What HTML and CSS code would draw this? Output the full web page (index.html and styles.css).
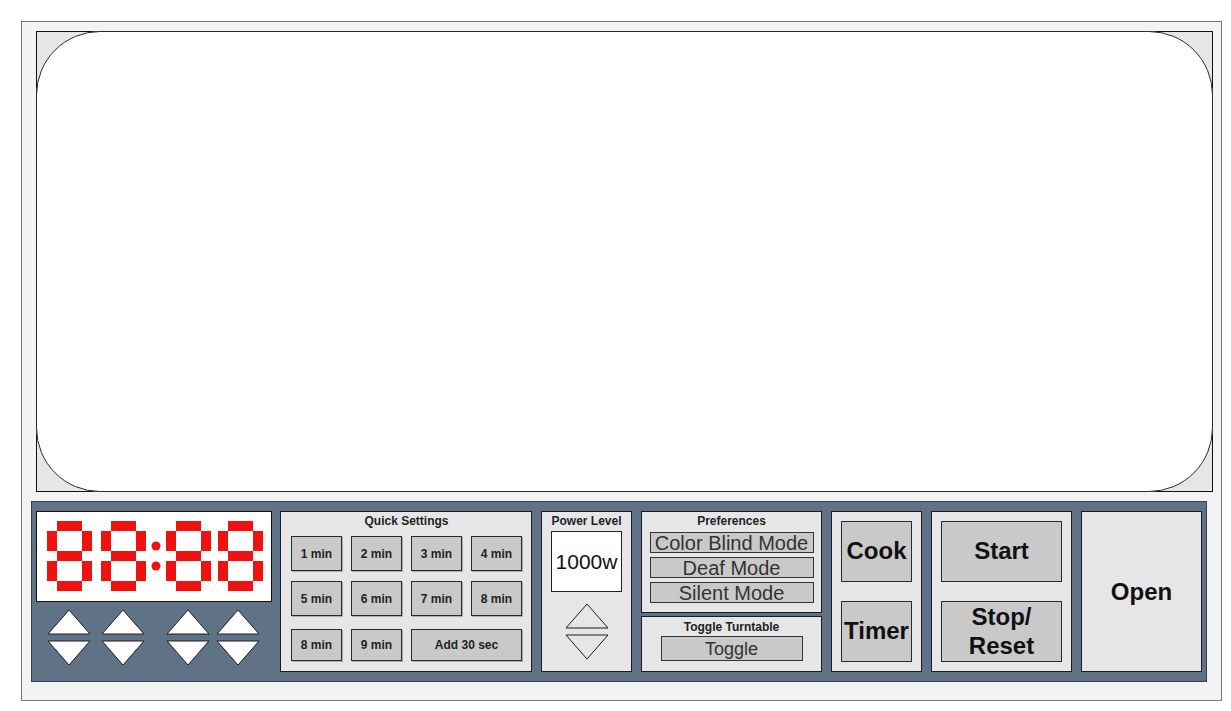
FILE: index.html
```html
<!DOCTYPE html>
<html>
<head>
<meta charset="utf-8">
<title>Microwave</title>
<link rel="stylesheet" href="styles.css">
</head>
<body>
<div class="oven">
  <div class="window"><div class="glass"></div></div>
  <div class="panel">
    <div class="clock">
      <div class="display" aria-label="88:88">
        <svg width="234" height="89" viewBox="0 0 234 89">
          <defs>
            <g id="d8" fill="#f01210">
              <rect x="10" y="0" width="25" height="10"/>
              <rect x="0" y="10" width="10" height="20"/>
              <rect x="35" y="10" width="10" height="20"/>
              <rect x="10" y="30" width="25" height="10"/>
              <rect x="0" y="40" width="10" height="20"/>
              <rect x="35" y="40" width="10" height="20"/>
              <rect x="10" y="60" width="25" height="10"/>
            </g>
          </defs>
          <use href="#d8" x="10" y="9"/>
          <use href="#d8" x="64" y="9"/>
          <circle cx="119" cy="34" r="4.5" fill="#f01210"/>
          <circle cx="119" cy="54" r="4.5" fill="#f01210"/>
          <use href="#d8" x="129" y="9"/>
          <use href="#d8" x="181" y="9"/>
        </svg>
      </div>
      <div class="arrows">
        <svg class="pair p1" width="44" height="58" viewBox="0 0 44 58"><polygon points="1,25 22,1 43,25"/><polygon points="1,32 43,32 22,56"/></svg>
        <svg class="pair p2" width="44" height="58" viewBox="0 0 44 58"><polygon points="1,25 22,1 43,25"/><polygon points="1,32 43,32 22,56"/></svg>
        <svg class="pair p3" width="44" height="58" viewBox="0 0 44 58"><polygon points="1,25 22,1 43,25"/><polygon points="1,32 43,32 22,56"/></svg>
        <svg class="pair p4" width="44" height="58" viewBox="0 0 44 58"><polygon points="1,25 22,1 43,25"/><polygon points="1,32 43,32 22,56"/></svg>
      </div>
    </div>

    <div class="box quick">
      <div class="title">Quick Settings</div>
      <div class="qgrid">
        <div class="btn">1 min</div>
        <div class="btn">2 min</div>
        <div class="btn">3 min</div>
        <div class="btn">4 min</div>
        <div class="btn">5 min</div>
        <div class="btn">6 min</div>
        <div class="btn">7 min</div>
        <div class="btn">8 min</div>
        <div class="btn last">8 min</div>
        <div class="btn last">9 min</div>
        <div class="btn last wide">Add 30 sec</div>
      </div>
    </div>

    <div class="box power">
      <div class="title">Power Level</div>
      <div class="watts">1000w</div>
      <svg class="parrows" width="44" height="58" viewBox="0 0 44 58"><polygon points="1,25 22,1 43,25"/><polygon points="1,32 43,32 22,56"/></svg>
    </div>

    <div class="prefcol">
      <div class="box prefs">
        <div class="title">Preferences</div>
        <div class="pbtn">Color Blind Mode</div>
        <div class="pbtn">Deaf Mode</div>
        <div class="pbtn">Silent Mode</div>
      </div>
      <div class="box turn">
        <div class="title">Toggle Turntable</div>
        <div class="pbtn toggle">Toggle</div>
      </div>
    </div>

    <div class="box stack cook">
      <div class="bigbtn">Cook</div>
      <div class="bigbtn">Timer</div>
    </div>

    <div class="box stack start">
      <div class="bigbtn">Start</div>
      <div class="bigbtn two">Stop/<br>Reset</div>
    </div>

    <div class="box open">Open</div>
  </div>
</div>
</body>
</html>
```

FILE: styles.css
```css
* { box-sizing: border-box; }

html, body {
  margin: 0;
  padding: 0;
  background: #ffffff;
  font-family: "Liberation Sans", Arial, sans-serif;
}

.oven {
  margin: 21px 0 0 21px;
  width: 1201px;
  height: 680px;
  background: #f3f3f3;
  border: 1px solid #7b7b7b;
  padding: 9px 9px 0 9px;
}

.window {
  margin-left: 5px;
  width: 1177px;
  height: 461px;
  background: #e6e6e6;
  border: 1px solid #111;
}

.glass {
  margin: -1px;
  width: calc(100% + 2px);
  height: calc(100% + 2px);
  background: #fff;
  border: 1px solid #2a2a2a;
  border-radius: 64px;
}

.panel {
  margin-top: 9px;
  width: 1176px;
  height: 181px;
  background: #607286;
  border: 1px solid #34404e;
  padding: 9px 4px;
  display: flex;
  gap: 9px;
}

.clock {
  width: 236px;
  margin-right: -1px;
  display: flex;
  flex-direction: column;
}

.display {
  width: 236px;
  height: 91px;
  background: #fff;
  border: 1px solid #111;
}

.display svg { display: block; }

.arrows {
  display: flex;
  margin-top: 7px;
  padding-left: 11px;
}

.pair polygon {
  fill: #fff;
  stroke: #1d1d1d;
  stroke-width: 1;
}

.pair.p2 { margin-left: 10px; }
.pair.p3 { margin-left: 21px; }
.pair.p4 { margin-left: 6px; }

.box {
  background: #e6e6e6;
  border: 1px solid #1c1c1c;
  height: 161px;
}

.title {
  font-weight: bold;
  font-size: 12px;
  line-height: 14px;
  color: #1f1f1f;
  text-align: center;
  padding-top: 2px;
}

.quick {
  width: 252px;
  padding: 0 9px 0 10px;
}

.qgrid {
  margin-top: 8px;
  display: grid;
  grid-template-columns: repeat(4, 51px);
  grid-auto-rows: 35px;
  column-gap: 9px;
  row-gap: 10px;
}

.btn {
  background: #c9c9c9;
  border: 1px solid #2a2a2a;
  box-shadow: 1px 1px 0 rgba(0, 0, 0, 0.25);
  display: flex;
  align-items: center;
  justify-content: center;
  font-size: 12px;
  font-weight: bold;
  color: #222;
}

.btn.last { margin-top: 3px; }
.btn.wide { grid-column: span 2; }

.power {
  width: 91px;
  display: flex;
  flex-direction: column;
  align-items: center;
}

.watts {
  margin-top: 3px;
  width: 71px;
  height: 61px;
  background: #fff;
  border: 1px solid #222;
  display: flex;
  align-items: center;
  justify-content: center;
  font-size: 21px;
  color: #111;
}

.parrows {
  margin-top: 11px;
}

.parrows polygon {
  fill: none;
  stroke: #1d1d1d;
  stroke-width: 1;
}

.prefcol {
  width: 181px;
  display: flex;
  flex-direction: column;
  gap: 3px;
}

.prefs {
  height: 102px;
  display: flex;
  flex-direction: column;
  align-items: center;
}

.pbtn {
  width: 164px;
  height: 21px;
  margin-top: 4px;
  background: #c9c9c9;
  border: 1px solid #333;
  display: flex;
  align-items: center;
  justify-content: center;
  font-size: 20px;
  line-height: 20px;
  color: #333;
  white-space: nowrap;
}

.prefs .title { margin-bottom: 0; }

.turn {
  height: 56px;
  display: flex;
  flex-direction: column;
  align-items: center;
}

.turn .title { padding-top: 3px; }

.pbtn.toggle {
  width: 142px;
  height: 25px;
  margin-top: 2px;
  font-size: 18px;
}

.stack {
  padding: 9px;
  display: flex;
  flex-direction: column;
  justify-content: space-between;
}

.cook { width: 91px; }
.start { width: 141px; }

.bigbtn {
  height: 61px;
  background: #c9c9c9;
  border: 1px solid #2a2a2a;
  display: flex;
  align-items: center;
  justify-content: center;
  text-align: center;
  font-size: 24px;
  font-weight: bold;
  line-height: 1.2;
  color: #111;
  white-space: nowrap;
}

.open {
  width: 121px;
  display: flex;
  align-items: center;
  justify-content: center;
  font-size: 24px;
  font-weight: bold;
  color: #111;
}
```
